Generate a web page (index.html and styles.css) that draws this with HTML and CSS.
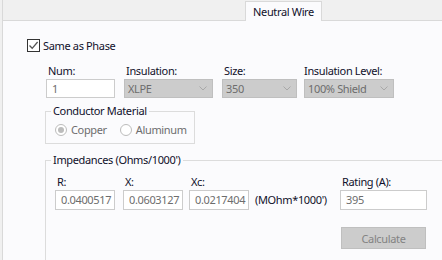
FILE: index.html
```html
<!DOCTYPE html>
<html lang="en">
<head>
    <meta charset="UTF-8">
    <title>Neutral Wire</title>
    <link rel="stylesheet" href="styles.css">
</head>
<body>
    <div class="tabs">
        <div class="tab">Neutral Wire</div>
    </div>

    <div class="panel">
        <label class="same">
            <span class="checkbox">
                <svg width="11" height="11" viewBox="0 0 11 11"><path d="M1.5 5.5 L4.2 8.3 L9.6 2" fill="none" stroke="#555" stroke-width="1.3"/></svg>
            </span>
            Same as Phase
        </label>

        <div class="fields">
            <div class="field f-num">
                <span class="lbl">Num:</span>
                <div class="box">1</div>
            </div>
            <div class="field f-ins">
                <span class="lbl">Insulation:</span>
                <div class="combo">XLPE <svg class="chev" width="8" height="5" viewBox="0 0 8 5"><path d="M0.5 0.5 L4 4 L7.5 0.5" fill="none" stroke="#a8a8a8"/></svg></div>
            </div>
            <div class="field f-size">
                <span class="lbl">Size:</span>
                <div class="combo">350 <svg class="chev" width="8" height="5" viewBox="0 0 8 5"><path d="M0.5 0.5 L4 4 L7.5 0.5" fill="none" stroke="#a8a8a8"/></svg></div>
            </div>
            <div class="field f-level">
                <span class="lbl">Insulation Level:</span>
                <div class="combo">100% Shield <svg class="chev" width="8" height="5" viewBox="0 0 8 5"><path d="M0.5 0.5 L4 4 L7.5 0.5" fill="none" stroke="#a8a8a8"/></svg></div>
            </div>
        </div>

        <fieldset class="group material">
            <legend>Conductor Material</legend>
            <div class="radios">
                <span class="radio"><span class="dot on"></span>Copper</span>
                <span class="radio"><span class="dot"></span>Aluminum</span>
            </div>
        </fieldset>

        <fieldset class="group imped">
            <legend>Impedances (Ohms/1000')</legend>
            <div class="zrow">
                <div class="field f-r">
                    <span class="lbl">R:</span>
                    <div class="box">0.0400517</div>
                </div>
                <div class="field f-x">
                    <span class="lbl">X:</span>
                    <div class="box">0.0603127</div>
                </div>
                <div class="field f-xc">
                    <span class="lbl">Xc:</span>
                    <div class="box">0.0217404</div>
                </div>
                <span class="unit">(MOhm*1000')</span>
                <div class="field f-rating">
                    <span class="lbl">Rating (A):</span>
                    <div class="box">395</div>
                    <button class="calc" disabled>Calculate</button>
                </div>
            </div>
        </fieldset>
    </div>
</body>
</html>
```

FILE: styles.css
```css
body {
    margin: 0;
    background-color: #f0f0f0;
    font-family: "Noto Sans", "Liberation Sans", sans-serif;
    font-size: 11px;
    letter-spacing: -0.35px;
    color: #10102a;
    overflow: hidden;
    width: 442px;
    height: 260px;
}
.tabs {
    height: 20px;
    border-left: 1px solid #d9d9d9;
    margin-left: 2px;
    display: flex;
    align-items: flex-end;
}
.tab {
    margin-left: 242px;
    width: 75px;
    height: 19px;
    border: 1px solid #d9d9d9;
    border-bottom: none;
    background-color: #fbfbfd;
    text-align: center;
    line-height: 19px;
    position: relative;
    top: 1px;
}
.panel {
    margin-left: 2px;
    border-left: 1px solid #d9d9d9;
    border-top: 1px solid #d9d9d9;
    background-color: #fbfbfd;
    height: 240px;
    overflow: hidden;
}
.same {
    display: flex;
    align-items: center;
    gap: 3px;
    margin: 18px 0 0 24px;
    height: 13px;
}
.checkbox {
    width: 11px;
    height: 11px;
    border: 1px solid #333333;
    background-color: #ffffff;
    display: flex;
}
.fields {
    display: flex;
    margin: 12px 0 0 43px;
}
.field {
    display: flex;
    flex-direction: column;
}
.lbl {
    height: 14px;
    line-height: 14px;
    padding-left: 2px;
    margin-bottom: 1px;
    white-space: nowrap;
}
.box, .combo {
    box-sizing: border-box;
    height: 19px;
    line-height: 17px;
    border: 1px solid #cccccc;
    background-color: #ffffff;
    color: #6d6d6d;
    padding-left: 5px;
    white-space: nowrap;
    overflow: hidden;
}
.combo {
    background-color: #cccccc;
    border-color: #bfbfbf;
    padding-left: 3px;
    display: flex;
    align-items: center;
    justify-content: space-between;
    padding-right: 5px;
}
.f-num { width: 69px; margin-right: 9px; }
.f-ins { width: 89px; margin-right: 9px; }
.f-size { width: 75px; margin-right: 7px; }
.f-level { width: 90px; }
.f-level .lbl { padding-left: 0; }

.group {
    box-sizing: border-box;
    border: 1px solid #dcdcdc;
    margin: 0;
    padding: 0 5px;
}
.group legend {
    padding: 0 2px;
    line-height: 14px;
}
.material {
    width: 150px;
    margin: 6px 0 0 42px;
}
.radios {
    display: flex;
    margin: 5px 0 7px 4px;
    height: 13px;
    color: #6d6d6d;
}
.radio {
    display: flex;
    align-items: center;
    gap: 4px;
}
.radio + .radio {
    margin-left: 13px;
}
.dot {
    box-sizing: border-box;
    width: 12px;
    height: 12px;
    border: 1px solid #bcbcbc;
    border-radius: 50%;
    background-color: #ffffff;
    display: flex;
    align-items: center;
    justify-content: center;
}
.dot.on::after {
    content: "";
    width: 6px;
    height: 6px;
    border-radius: 50%;
    background-color: #bcbcbc;
}
.imped {
    width: 420px;
    height: 120px;
    margin: 9px 0 0 42px;
}
.zrow {
    display: flex;
    margin: 8px 0 0 4px;
}
.zrow .box {
    height: 20px;
    line-height: 18px;
}
.f-r { width: 60px; margin-right: 8px; }
.f-x { width: 60px; margin-right: 6px; }
.f-xc { width: 60px; margin-right: 6px; }
.unit {
    width: 85px;
    margin-top: 15px;
    line-height: 20px;
}
.f-rating { width: 87px; }
.calc {
    margin: 17px 0 0 1px;
    width: 85px;
    height: 22px;
    background-color: #cccccc;
    border: 1px solid #bfbfbf;
    color: #838383;
    font-family: inherit;
    font-size: 11px;
    letter-spacing: -0.35px;
    padding: 0;
}
```
